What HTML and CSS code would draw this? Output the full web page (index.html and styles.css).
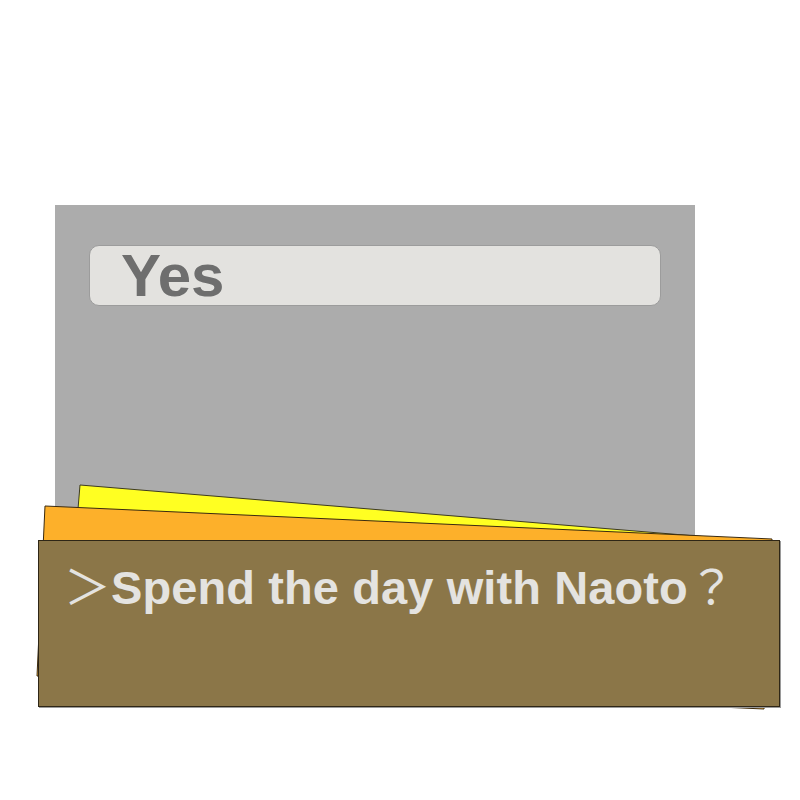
FILE: index.html
```html
<!DOCTYPE html>
<html lang="en">
<head>
  <meta charset="UTF-8">
  <title>Choice</title>
  <link rel="stylesheet" href="styles.css">
</head>
<body>
  <div class="scene">
    <!-- answer menu -->
    <section class="panel">
      <div class="choice">Yes</div>
    </section>

    <!-- stacked note cards peeking out behind the dialog -->
    <svg class="papers" width="800" height="800" viewBox="0 0 800 800">
      <polygon points="80,485 768,542 766,566 78,509" fill="#ffff22" stroke="#3d3a20" stroke-width="1"/>
      <polygon points="45,506 772,539 764,709 37,676" fill="#fdb02a" stroke="#3a2a10" stroke-width="1"/>
    </svg>

    <!-- dialog line -->
    <div class="dialog">
      <span class="mark">＞</span>Spend the day with Naoto<span class="mark">？</span>
    </div>
  </div>
</body>
</html>
```

FILE: styles.css
```css
body, html {
  margin: 0;
  padding: 0;
  background: #fff;
  font-family: "Liberation Sans", Arial, sans-serif;
}

.scene {
  position: relative;
  width: 800px;
  height: 800px;
  padding-top: 205px;
  box-sizing: border-box;
}

.panel {
  margin-left: 55px;
  width: 640px;
  height: 335px;
  padding: 40px 34px;
  box-sizing: border-box;
  background-color: #acacac;
}

.choice {
  height: 61px;
  padding-left: 31px;
  box-sizing: border-box;
  background-color: #e3e2df;
  border: 1px solid #9c9c9c;
  border-radius: 10px;
  color: #6e6e6e;
  font-size: 60px;
  font-weight: bold;
  line-height: 60px;
}

.papers {
  position: absolute;
  left: 0;
  top: 0;
}

.dialog {
  position: relative;
  margin-left: 38px;
  width: 742px;
  height: 167px;
  padding: 19px 0 0 25px;
  box-sizing: border-box;
  background-color: #8b7648;
  border: 1px solid #2e2616;
  box-shadow: 1px 1px 0 #9a9a9a;
  color: #e4e3e0;
  font-size: 47px;
  font-weight: bold;
  line-height: 47px;
  letter-spacing: 0.1px;
  white-space: nowrap;
}

.dialog .mark {
  font-family: "Noto Sans CJK JP", sans-serif;
  font-weight: normal;
  letter-spacing: 0;
}
```
